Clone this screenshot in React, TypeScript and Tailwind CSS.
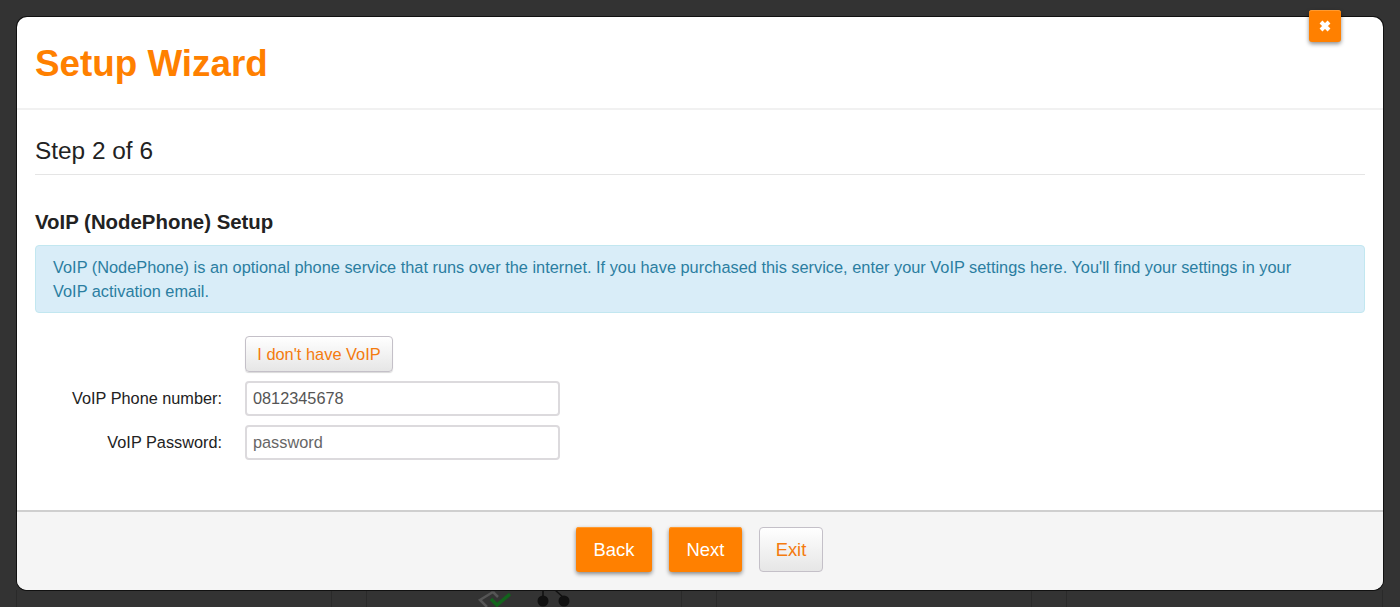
const font = { fontFamily: '"Liberation Sans", Arial, sans-serif' };

function DarkBackdrop() {
  return (
    <div className="absolute inset-0 bg-[#333333]">
      <div className="absolute left-[331px] top-[590px] bottom-0 w-px bg-[#2a2a2a]" />
      <div className="absolute left-[366px] top-[590px] bottom-0 w-px bg-[#2a2a2a]" />
      <div className="absolute left-[681px] top-[590px] bottom-0 w-px bg-[#2a2a2a]" />
      <div className="absolute left-[716px] top-[590px] bottom-0 w-px bg-[#2a2a2a]" />
      <div className="absolute left-[1031px] top-[590px] bottom-0 w-px bg-[#2a2a2a]" />
      <div className="absolute left-[1066px] top-[590px] bottom-0 w-px bg-[#2a2a2a]" />
      <div className="absolute left-[1382px] top-[590px] bottom-0 w-px bg-[#2a2a2a]" />
      <div className="absolute left-[16px] top-[590px] bottom-0 w-px bg-[#2a2a2a]" />
      <svg className="absolute left-[476px] top-[590px]" width="100" height="17" viewBox="0 0 100 17">
        <path d="M17 2 L4 10 L11 17 M17 2 L22 7" fill="none" stroke="#555555" strokeWidth="2.5" />
        <path d="M15 9 L21 15 L34 4" fill="none" stroke="#12641c" strokeWidth="3.5" />
        <path d="M67 0 V10 M79 0 L88 8" fill="none" stroke="#111111" strokeWidth="1.5" />
        <circle cx="67" cy="11" r="5.5" fill="#111111" />
        <circle cx="88" cy="11" r="5.5" fill="#111111" />
      </svg>
    </div>
  );
}

export default function App() {
  return (
    <div className="relative h-[607px] w-[1400px] overflow-hidden" style={font}>
      <DarkBackdrop />
      <div className="relative ml-[17px] mt-[17px] flex h-[573px] w-[1366px] flex-col rounded-[10px] bg-white shadow-[0_0_0_1px_#111111]">
        <div className="flex h-[93px] items-center border-b-2 border-[#f1f1f1] pl-[18px]">
          <h1 className="pt-[2px] text-[36.8px] font-bold text-[#ff8000]">Setup Wizard</h1>
        </div>
        <div className="flex-1 px-[18px]">
          <div className="flex h-[65px] items-end border-b border-[#e5e5e5] pb-[7px]">
            <h2 className="text-[24.4px] leading-[32px] text-[#222222]">Step 2 of 6</h2>
          </div>
          <h3 className="mt-[35px] text-[20.4px] leading-[24px] font-bold text-[#222222]">VoIP (NodePhone) Setup</h3>
          <div className="mt-[11px] h-[68px] rounded-[4px] border border-[#c2e7f0] bg-[#d9edf8] pl-[17px] pr-[60px] pt-[9px] text-[16.35px] leading-[24px] text-[#2b7ea1]">
            VoIP (NodePhone) is an optional phone service that runs over the internet. If you have purchased this service, enter your VoIP settings here. You'll find your settings in your VoIP activation email.
          </div>
          <div className="mt-[23px] flex flex-col">
            <div className="pl-[210px]">
              <button className="h-[36px] w-[148px] rounded-[4px] border border-[#c4c0c8] bg-gradient-to-b from-white to-[#e6e6e6] text-[16.4px] text-[#f47b0e] shadow-[0_1px_1px_rgba(0,0,0,0.15)]">
                I don't have VoIP
              </button>
            </div>
            <div className="mt-[9px] flex items-center">
              <label className="w-[187px] text-right text-[16.3px] text-[#222222]">VoIP Phone number:</label>
              <input readOnly value="0812345678" className="ml-[23px] h-[35px] w-[315px] rounded-[4px] border-2 border-[#dcdadd] px-[6px] text-[16.3px] text-[#555555]" />
            </div>
            <div className="mt-[9px] flex items-center">
              <label className="w-[187px] text-right text-[16.3px] text-[#222222]">VoIP Password:</label>
              <input readOnly placeholder="password" className="ml-[23px] h-[35px] w-[315px] rounded-[4px] border-2 border-[#dcdadd] px-[6px] text-[16.3px] text-[#555555] placeholder:text-[#666666]" />
            </div>
          </div>
        </div>
        <div className="flex h-[80px] items-start justify-center gap-[17px] rounded-b-[10px] border-t-2 border-[#cfcfcf] bg-[#f5f5f5] pr-[1px] pt-[15px]">
          <button className="h-[45px] w-[76px] rounded-[3px] bg-[#ff8000] text-[18.4px] text-white shadow-[0_2px_4px_rgba(0,0,0,0.45),inset_0_1px_0_#ff9a30]">Back</button>
          <button className="h-[45px] w-[73px] rounded-[3px] bg-[#ff8000] text-[18.4px] text-white shadow-[0_2px_4px_rgba(0,0,0,0.45),inset_0_1px_0_#ff9a30]">Next</button>
          <button className="h-[45px] w-[64px] rounded-[4px] border border-[#c4c0c8] bg-gradient-to-b from-white to-[#e6e6e6] text-[18.4px] text-[#f47b0e]">Exit</button>
        </div>
        <button className="absolute right-[42px] top-[-7px] flex h-[32px] w-[32px] items-center justify-center rounded-[3px] bg-[#ff8000] shadow-[0_2px_4px_rgba(0,0,0,0.45),inset_0_1px_0_#ff9a30]">
          <svg width="14" height="14" viewBox="0 0 14 14">
            <path d="M3 3 L11 11 M11 3 L3 11" stroke="#ffffff" strokeWidth="4" />
          </svg>
        </button>
      </div>
    </div>
  );
}
